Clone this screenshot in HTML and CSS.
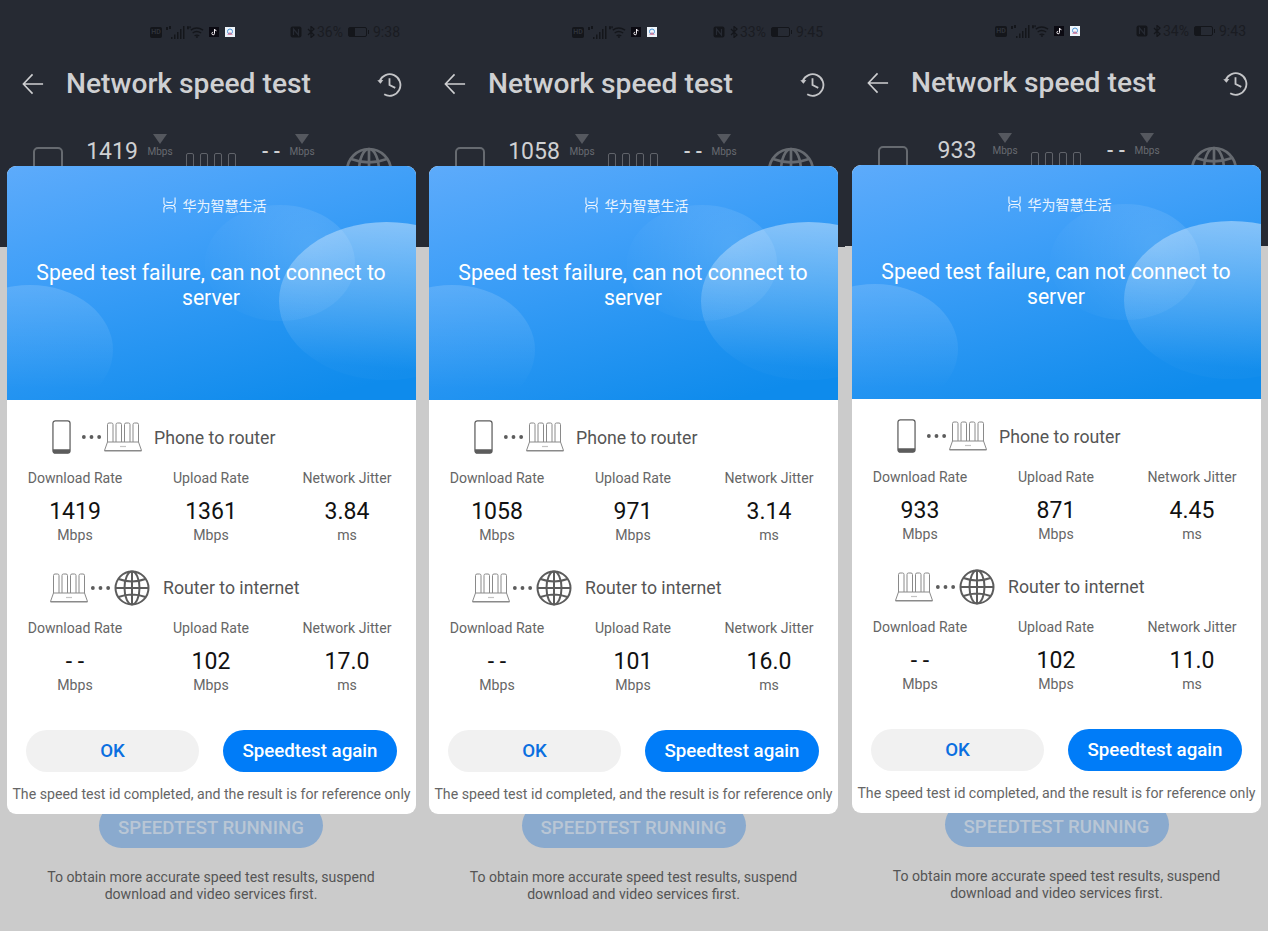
FILE: index.html
```html
<!DOCTYPE html>
<html lang="en">
<head>
<meta charset="utf-8">
<title>Network speed test</title>
<link rel="stylesheet" href="styles.css">
</head>
<body>
<svg class="defs" width="0" height="0" aria-hidden="true">
  <symbol id="router" viewBox="0 0 38 30">
    <g fill="none" stroke="currentColor" stroke-width="1">
      <path d="M3.500 20V2.500q0-1.500 1.500-1.500h2.500q1.500 0 1.500 1.500V20M12 20V2.500Q12 1 13.500 1H16q1.500 0 1.500 1.500V20M20.500 20V2.500q0-1.500 1.500-1.500h2.500q1.500 0 1.500 1.500V20M29 20V2.500Q29 1 30.500 1H33q1.500 0 1.500 1.500V20"/>
      <path d="M3.500 20h31l3 8.500H.5z" stroke-linejoin="round"/>
    </g>
    <path d="M.5 28h37v1.500H.5z" fill="currentColor"/>
    <path d="M16 24.500h6" stroke="currentColor" stroke-width="1.200" opacity=".5"/>
  </symbol>
  <symbol id="globe" viewBox="0 0 36 36">
    <g fill="none" stroke="currentColor" stroke-width="2">
      <circle cx="18" cy="18" r="16.500"/>
      <ellipse cx="18" cy="18" rx="7.500" ry="16.500"/>
      <path d="M18 1.500v33M1.500 18h33M4.500 9q13.500 5 27 0M4.500 27q13.500-5 27 0"/>
    </g>
  </symbol>
  <symbol id="phone" viewBox="0 0 20 36">
    <rect x="1" y="1" width="18" height="34" rx="2.500" fill="none" stroke="currentColor" stroke-width="1.300"/>
    <path d="M1 31h18v2a2 2 0 0 1-2 2H3a2 2 0 0 1-2-2z" fill="currentColor"/>
  </symbol>
  <symbol id="dots" viewBox="0 0 22 6">
    <circle cx="3" cy="3" r="2" fill="currentColor"/><circle cx="11" cy="3" r="2" fill="currentColor"/><circle cx="19" cy="3" r="2" fill="currentColor"/>
  </symbol>
  <symbol id="logo" viewBox="0 0 14 16">
    <path d="M1 0v6q0 2 2.500 2.500h7Q13 9 13 11v5M13 0v6q0 2-2.500 2.500h-7Q1 9 1 11v5M3.500 4.500q3.500 2 7 0M3.500 12q3.500-2 7 0" fill="none" stroke="currentColor" stroke-width="1.200"/>
  </symbol>
  <symbol id="back" viewBox="0 0 24 24">
    <path d="M23 12H2M11.500 1.500 1.500 12l10 10.500" fill="none" stroke="currentColor" stroke-width="1.700"/>
  </symbol>
  <symbol id="history" viewBox="0 0 26 26">
    <path d="M2.700 9.500A11.200 11.200 0 1 1 7.500 23.200" fill="none" stroke="currentColor" stroke-width="1.900"/>
    <path d="M.3 8.500l3.300 3.600 3-3.900z" fill="currentColor"/>
    <path d="M13 6.500v7l6 3" fill="none" stroke="currentColor" stroke-width="1.900"/>
  </symbol>
  <symbol id="signal" viewBox="0 0 19 13"><path d="M5 11h1.500v2H5zM8 8.500h1.500V13H8zM11 6h1.500v7H11zM14 3h1.500v10H14zM17 0h1.500v13H17z" fill="currentColor"/><path d="M0 1h2v3H0zM3 0h2v3H3z" fill="currentColor"/></symbol>
  <symbol id="wifi" viewBox="0 0 18 12"><path d="M4 4q6-4.500 13 0M6 7q4-3 9 0M8 10q2.500-1.500 5 0" fill="none" stroke="currentColor" stroke-width="1.400"/><path d="M0 0h2v3H0zM2.500 0h1.500v2H2.500zM9.500 10.500h2v1.500h-2z" fill="currentColor"/></symbol>
  <symbol id="tiktok" viewBox="0 0 10 10"><rect width="10" height="10" fill="#0b0a12"/><path d="M5.500 2v4.500a1.300 1.300 0 1 1-1.300-1.300M5.500 2q.3 1.500 2 1.800" fill="none" stroke="#f3eef2" stroke-width="1"/></symbol>
  <symbol id="app" viewBox="0 0 10 10"><rect width="10" height="10" fill="#eef4fa"/><circle cx="5" cy="4.500" r="2.500" fill="none" stroke="#4b94d6" stroke-width="1"/><path d="M2 8l3-3 3 3z" fill="#d96c8d" opacity=".7"/></symbol>
  <symbol id="nfc" viewBox="0 0 12 12"><rect x=".5" y=".5" width="11" height="11" rx="2" fill="currentColor"/><path d="M3.500 9V3l5 6V3" fill="none" stroke="#262a33" stroke-width="1.200"/></symbol>
  <symbol id="bt" viewBox="0 0 8 12"><path d="M1 3l6 6-3 2.500V.500L7 3 1 9" fill="none" stroke="currentColor" stroke-width="1.200"/></symbol>
</svg>

<main class="triptych">

  <section class="panel">
    <div class="dark">
      <div class="status">
        <span class="st-hd">HD</span><svg class="st st-sig"><use href="#signal"/></svg><svg class="st st-wifi"><use href="#wifi"/></svg><svg class="st st-app"><use href="#tiktok"/></svg><svg class="st st-app st-app2"><use href="#app"/></svg>
        <span class="st-gap"></span>
        <svg class="st st-nfc"><use href="#nfc"/></svg><svg class="st st-bt"><use href="#bt"/></svg><span class="st-text">36%</span><span class="batt"><span class="batt-fill fill-36"></span></span><span class="st-text st-time">9:38</span>
      </div>
      <div class="appbar">
        <svg class="back"><use href="#back"/></svg>
        <h1 class="title">Network speed test</h1>
        <svg class="history"><use href="#history"/></svg>
      </div>
      <div class="meter">
        <span class="m-phone"></span>
        <span class="m-val">1419</span>
        <span class="m-unit"><i class="tri"></i>Mbps</span>
        <span class="m-bars"><i></i><i></i><i></i><i></i></span>
        <span class="m-val m-val2">- -</span>
        <span class="m-unit"><i class="tri"></i>Mbps</span>
        <svg class="m-globe"><use href="#globe"/></svg>
      </div>
    </div>
    <div class="lower">
      <div class="running">SPEEDTEST RUNNING</div>
      <p class="hint">To obtain more accurate speed test results, suspend download and video services first.</p>
    </div>
    <div class="dialog">
      <div class="hero">
        <i class="blob blob-a"></i><i class="blob blob-b"></i><i class="blob blob-c"></i>
        <div class="brand"><svg class="brand-logo"><use href="#logo"/></svg><span>华为智慧生活</span></div>
        <p class="fail">Speed test failure, can not connect to server</p>
      </div>
      <div class="body">
        <div class="leg"><svg class="ic-phone"><use href="#phone"/></svg><svg class="ic-dots"><use href="#dots"/></svg><svg class="ic-router"><use href="#router"/></svg><span class="leg-name">Phone to router</span></div>
        <div class="stats">
          <div class="stat"><span class="lab">Download Rate</span><b class="num">1419</b><span class="lab">Mbps</span></div>
          <div class="stat"><span class="lab">Upload Rate</span><b class="num">1361</b><span class="lab">Mbps</span></div>
          <div class="stat"><span class="lab">Network Jitter</span><b class="num">3.84</b><span class="lab">ms</span></div>
        </div>
        <div class="leg leg-net"><svg class="ic-router"><use href="#router"/></svg><svg class="ic-dots ic-dots2"><use href="#dots"/></svg><svg class="ic-globe"><use href="#globe"/></svg><span class="leg-name">Router to internet</span></div>
        <div class="stats">
          <div class="stat"><span class="lab">Download Rate</span><b class="num">- -</b><span class="lab">Mbps</span></div>
          <div class="stat"><span class="lab">Upload Rate</span><b class="num">102</b><span class="lab">Mbps</span></div>
          <div class="stat"><span class="lab">Network Jitter</span><b class="num">17.0</b><span class="lab">ms</span></div>
        </div>
        <div class="actions"><button class="btn btn-ok">OK</button><button class="btn btn-go">Speedtest again</button></div>
        <p class="note">The speed test id completed, and the result is for reference only</p>
      </div>
    </div>
  </section>

  <section class="panel">
    <div class="dark">
      <div class="status">
        <span class="st-hd">HD</span><svg class="st st-sig"><use href="#signal"/></svg><svg class="st st-wifi"><use href="#wifi"/></svg><svg class="st st-app"><use href="#tiktok"/></svg><svg class="st st-app st-app2"><use href="#app"/></svg>
        <span class="st-gap"></span>
        <svg class="st st-nfc"><use href="#nfc"/></svg><svg class="st st-bt"><use href="#bt"/></svg><span class="st-text">33%</span><span class="batt"><span class="batt-fill fill-33"></span></span><span class="st-text st-time">9:45</span>
      </div>
      <div class="appbar">
        <svg class="back"><use href="#back"/></svg>
        <h1 class="title">Network speed test</h1>
        <svg class="history"><use href="#history"/></svg>
      </div>
      <div class="meter">
        <span class="m-phone"></span>
        <span class="m-val">1058</span>
        <span class="m-unit"><i class="tri"></i>Mbps</span>
        <span class="m-bars"><i></i><i></i><i></i><i></i></span>
        <span class="m-val m-val2">- -</span>
        <span class="m-unit"><i class="tri"></i>Mbps</span>
        <svg class="m-globe"><use href="#globe"/></svg>
      </div>
    </div>
    <div class="lower">
      <div class="running">SPEEDTEST RUNNING</div>
      <p class="hint">To obtain more accurate speed test results, suspend download and video services first.</p>
    </div>
    <div class="dialog">
      <div class="hero">
        <i class="blob blob-a"></i><i class="blob blob-b"></i><i class="blob blob-c"></i>
        <div class="brand"><svg class="brand-logo"><use href="#logo"/></svg><span>华为智慧生活</span></div>
        <p class="fail">Speed test failure, can not connect to server</p>
      </div>
      <div class="body">
        <div class="leg"><svg class="ic-phone"><use href="#phone"/></svg><svg class="ic-dots"><use href="#dots"/></svg><svg class="ic-router"><use href="#router"/></svg><span class="leg-name">Phone to router</span></div>
        <div class="stats">
          <div class="stat"><span class="lab">Download Rate</span><b class="num">1058</b><span class="lab">Mbps</span></div>
          <div class="stat"><span class="lab">Upload Rate</span><b class="num">971</b><span class="lab">Mbps</span></div>
          <div class="stat"><span class="lab">Network Jitter</span><b class="num">3.14</b><span class="lab">ms</span></div>
        </div>
        <div class="leg leg-net"><svg class="ic-router"><use href="#router"/></svg><svg class="ic-dots ic-dots2"><use href="#dots"/></svg><svg class="ic-globe"><use href="#globe"/></svg><span class="leg-name">Router to internet</span></div>
        <div class="stats">
          <div class="stat"><span class="lab">Download Rate</span><b class="num">- -</b><span class="lab">Mbps</span></div>
          <div class="stat"><span class="lab">Upload Rate</span><b class="num">101</b><span class="lab">Mbps</span></div>
          <div class="stat"><span class="lab">Network Jitter</span><b class="num">16.0</b><span class="lab">ms</span></div>
        </div>
        <div class="actions"><button class="btn btn-ok">OK</button><button class="btn btn-go">Speedtest again</button></div>
        <p class="note">The speed test id completed, and the result is for reference only</p>
      </div>
    </div>
  </section>

  <section class="panel panel-up">
    <div class="dark">
      <div class="status">
        <span class="st-hd">HD</span><svg class="st st-sig"><use href="#signal"/></svg><svg class="st st-wifi"><use href="#wifi"/></svg><svg class="st st-app"><use href="#tiktok"/></svg><svg class="st st-app st-app2"><use href="#app"/></svg>
        <span class="st-gap"></span>
        <svg class="st st-nfc"><use href="#nfc"/></svg><svg class="st st-bt"><use href="#bt"/></svg><span class="st-text">34%</span><span class="batt"><span class="batt-fill fill-34"></span></span><span class="st-text st-time">9:43</span>
      </div>
      <div class="appbar">
        <svg class="back"><use href="#back"/></svg>
        <h1 class="title">Network speed test</h1>
        <svg class="history"><use href="#history"/></svg>
      </div>
      <div class="meter">
        <span class="m-phone"></span>
        <span class="m-val">933</span>
        <span class="m-unit"><i class="tri"></i>Mbps</span>
        <span class="m-bars"><i></i><i></i><i></i><i></i></span>
        <span class="m-val m-val2">- -</span>
        <span class="m-unit"><i class="tri"></i>Mbps</span>
        <svg class="m-globe"><use href="#globe"/></svg>
      </div>
    </div>
    <div class="lower">
      <div class="running">SPEEDTEST RUNNING</div>
      <p class="hint">To obtain more accurate speed test results, suspend download and video services first.</p>
    </div>
    <div class="dialog">
      <div class="hero">
        <i class="blob blob-a"></i><i class="blob blob-b"></i><i class="blob blob-c"></i>
        <div class="brand"><svg class="brand-logo"><use href="#logo"/></svg><span>华为智慧生活</span></div>
        <p class="fail">Speed test failure, can not connect to server</p>
      </div>
      <div class="body">
        <div class="leg"><svg class="ic-phone"><use href="#phone"/></svg><svg class="ic-dots"><use href="#dots"/></svg><svg class="ic-router"><use href="#router"/></svg><span class="leg-name">Phone to router</span></div>
        <div class="stats">
          <div class="stat"><span class="lab">Download Rate</span><b class="num">933</b><span class="lab">Mbps</span></div>
          <div class="stat"><span class="lab">Upload Rate</span><b class="num">871</b><span class="lab">Mbps</span></div>
          <div class="stat"><span class="lab">Network Jitter</span><b class="num">4.45</b><span class="lab">ms</span></div>
        </div>
        <div class="leg leg-net"><svg class="ic-router"><use href="#router"/></svg><svg class="ic-dots ic-dots2"><use href="#dots"/></svg><svg class="ic-globe"><use href="#globe"/></svg><span class="leg-name">Router to internet</span></div>
        <div class="stats">
          <div class="stat"><span class="lab">Download Rate</span><b class="num">- -</b><span class="lab">Mbps</span></div>
          <div class="stat"><span class="lab">Upload Rate</span><b class="num">102</b><span class="lab">Mbps</span></div>
          <div class="stat"><span class="lab">Network Jitter</span><b class="num">11.0</b><span class="lab">ms</span></div>
        </div>
        <div class="actions"><button class="btn btn-ok">OK</button><button class="btn btn-go">Speedtest again</button></div>
        <p class="note">The speed test id completed, and the result is for reference only</p>
      </div>
    </div>
  </section>

</main>
</body>
</html>
```
FILE: styles.css
```css
* { box-sizing: border-box; }
html, body { margin: 0; padding: 0; height: 100%; overflow: hidden; background: #cbcbcb; }
body { font-family: Roboto, "Noto Sans CJK SC", sans-serif; }
.defs { position: absolute; }

.triptych { display: grid; grid-template-columns: 422px 423px 423px; height: 931px; }
.panel { position: relative; height: 932px; background: #cbcbcb; }
.panel-up { margin-top: -1px; }

/* dark top */
.dark { height: 247px; background: #262a33; overflow: hidden; }
.status { display: flex; align-items: center; height: 16px; margin-top: 24px; padding: 0 22px 0 150px; color: #14161b; }
.st { display: block; flex: none; }
.st-hd { display: block; width: 12px; height: 11px; margin-right: 4px; border-radius: 2px; background: #14161b; color: #2e323a; font-size: 7px; font-weight: 700; line-height: 11px; text-align: center; flex: none; }
.st-sig { width: 19px; height: 13px; margin-right: 2px; }
.st-wifi { width: 17px; height: 12px; margin-right: 5px; }
.st-app { width: 10px; height: 10px; margin-right: 6px; }
.st-app2 { margin-right: 0; }
.st-gap { flex: 1; }
.st-nfc { width: 12px; height: 12px; margin-right: 5px; }
.st-bt { width: 8px; height: 12px; margin-right: 2px; }
.st-text { font-size: 14px; font-weight: 400; color: #1a1c22; }
.st-time { font-size: 14px; }
.batt { position: relative; display: block; width: 19px; height: 10px; margin: 0 6px 0 5px; border: 1px solid #14161b; border-radius: 2px; }
.batt::after { content: ""; position: absolute; right: -3px; top: 2px; width: 1px; height: 4px; background: #14161b; }
.batt-fill { display: block; height: 100%; background: #14161b; }
.fill-36 { width: 36%; }
.fill-33 { width: 33%; }
.fill-34 { width: 34%; }

.appbar { display: flex; align-items: center; height: 36px; margin-top: 26px; padding: 0 20px 0 22px; color: #cfd0d2; }
.back { width: 22px; height: 22px; flex: none; }
.title { flex: 1; margin: 0 0 0 22px; font-size: 28.200px; font-weight: 500; line-height: 36px; color: #cfd0d2; }
.history { width: 25px; height: 25px; flex: none; color: #c4c5c8; }

.meter { display: flex; height: 60px; margin-top: 45px; padding-left: 33px; color: #cfd0d2; }
.m-phone { display: block; width: 30px; height: 60px; border: 2px solid #666a70; border-radius: 5px; flex: none; }
.m-val { width: 60px; margin: -13px 6px 0 19px; font-size: 23px; line-height: 36px; text-align: center; flex: none; }
.m-unit { display: flex; flex-direction: column; align-items: center; width: 24px; margin-top: -13px; font-size: 10px; line-height: 12px; color: #686b71; flex: none; }
.tri { display: block; width: 0; height: 0; margin-bottom: 2px; border-left: 7.500px solid transparent; border-right: 7.500px solid transparent; border-top: 10px solid #55585f; }
.m-bars { display: flex; gap: 6px; margin: 6px 0 0 14px; flex: none; }
.m-bars i { display: block; width: 8px; height: 40px; border: 1.500px solid #60636a; border-radius: 2px 2px 0 0; }
.m-val2 { width: 20px; margin: -14px 9px 0 25px; font-size: 20px; font-weight: 500; }
.m-globe { width: 48px; height: 48px; margin: 0 0 0 31px; color: #666a70; flex: none; }

/* background lower part */
.lower { display: flex; flex-direction: column; align-items: center; padding-top: 556px; }
.running { width: 224px; height: 45px; border-radius: 23px; background: #8aaace; color: #b9c6d5; font-size: 18.600px; font-weight: 500; line-height: 50px; text-align: center; }
.hint { width: 340px; margin: 21px 0 0; font-size: 14.100px; line-height: 17px; color: #555; text-align: center; }

/* dialog overlay */
.dialog { position: absolute; left: 7px; top: 166px; width: 409px; height: 648px; border-radius: 9px; overflow: hidden; background: #fff; }
.hero { position: relative; height: 234px; overflow: hidden; background: linear-gradient(165deg, #5dabfb 0%, #3f9ff8 35%, #0e8bec 92%); color: #fff; text-align: center; }
.blob { position: absolute; display: block; border-radius: 50%; }
.blob-a { left: 198px; top: 39px; width: 150px; height: 116px; background: radial-gradient(circle at 70% 35%, rgba(255,255,255,.13), rgba(255,255,255,.01) 80%); }
.blob-b { left: 272px; top: 56px; width: 215px; height: 158px; background: linear-gradient(185deg, rgba(255,255,255,.42), rgba(255,255,255,.02) 88%); }
.blob-c { left: -60px; top: 119px; width: 166px; height: 130px; background: linear-gradient(180deg, rgba(255,255,255,.15), rgba(255,255,255,0) 80%); }
.brand { position: relative; display: flex; align-items: center; justify-content: center; gap: 7px; height: 20px; margin-top: 29px; padding-left: 6px; font: 14px/20px "Noto Sans CJK SC", sans-serif; color: #e8f3fe; }
.brand-logo { width: 13px; height: 16px; color: #eef6fe; }
.fail { position: relative; margin: 0; padding: 0 21px 0 20px; margin-top: 45px; font-size: 21.200px; line-height: 25px; font-weight: 400; }

.body { padding-top: 19px; }
.leg { display: flex; align-items: center; height: 36px; padding-left: 45px; font-size: 17.700px; color: #555; }
.ic-phone { width: 19px; height: 36px; flex: none; }
.ic-dots { width: 21px; height: 6px; margin: 0 2px 0 10px; flex: none; }
.ic-router { width: 38px; height: 30px; flex: none; color: #8a8a8a; }
.ic-phone, .ic-dots, .ic-globe { color: #5c5c5c; }
.ic-dots2 { margin: 0 3px 0 2px; }
.ic-globe { width: 36px; height: 36px; flex: none; }
.leg-name { margin-left: 12px; padding-top: 1px; }
.leg-net { padding-left: 43px; margin-top: 26px; }
.leg-net .leg-name { margin-left: 13px; padding-top: 0; }

.stats { display: grid; grid-template-columns: repeat(3, 136px); margin-top: 15px; }
.leg-net + .stats { margin-top: 14px; }
.stat { display: flex; flex-direction: column; align-items: center; }
.lab { font-size: 14.100px; line-height: 17px; color: #666; }
.num { margin: 10px 0 0; font-size: 23px; font-weight: 400; line-height: 30px; color: #111; }

.actions { display: flex; gap: 24px; padding: 0 19px; margin-top: 36px; }
.btn { height: 42px; padding: 1px 0 0; border: 0; border-radius: 21px; font: 500 18.700px/41px Roboto, sans-serif; flex: none; }
.btn-ok { width: 173px; background: #f1f1f1; color: #0a6fe0; }
.btn-go { width: 174px; background: #007cf8; color: #fff; }
.note { margin: 14px 0 0; font-size: 14.150px; line-height: 17px; color: #666; text-align: center; white-space: nowrap; }
```
